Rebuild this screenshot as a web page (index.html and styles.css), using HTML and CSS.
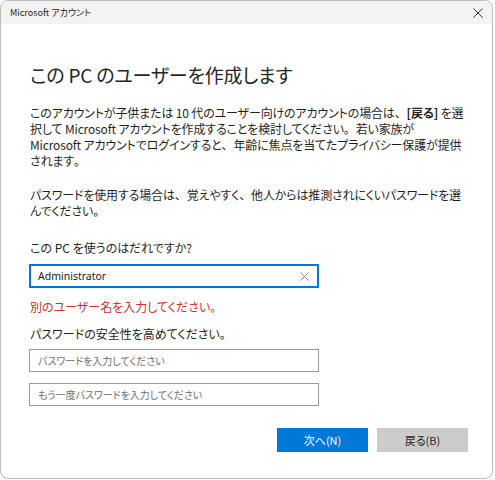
FILE: index.html
```html
<!DOCTYPE html>
<html lang="ja">
<head>
<meta charset="utf-8">
<link rel="stylesheet" href="styles.css">
</head>
<body>
<div class="window">
  <div class="titlebar">
    <span class="title">Microsoft アカウント</span>
    <svg class="close" width="10" height="10" viewBox="0 0 10 10"><path d="M0.5 0.5L9.5 9.5M9.5 0.5L0.5 9.5" stroke="#333" stroke-width="1"/></svg>
  </div>
  <div class="content">
    <h1 class="heading">この PC のユーザーを作成します</h1>
    <p class="para">このアカウントが子供または 10 代のユーザー向けのアカウントの場合は<span class="pn">、</span><b>[戻る]</b> を選<br>択して Microsoft アカウントを作成することを検討してください<span class="pn">。</span>若い家族が<br>Microsoft アカウントでログインすると<span class="pn">、</span>年齢に焦点を当てたプライバシー保護が提供<br>されます<span class="pn">。</span></p>
    <p class="para para2">パスワードを使用する場合は<span class="pn">、</span>覚えやすく<span class="pn">、</span>他人からは推測されにくいパスワードを選<br>んでください<span class="pn">。</span></p>
    <div class="label">この PC を使うのはだれですか?</div>
    <div class="field active">
      <span class="value">Administrator</span>
      <svg class="clear" width="9" height="9" viewBox="0 0 9 9"><path d="M0.5 0.5L8.5 8.5M8.5 0.5L0.5 8.5" stroke="#8a8a8a" stroke-width="1"/></svg>
    </div>
    <div class="error">別のユーザー名を入力してください<span class="pn">。</span></div>
    <div class="label label2">パスワードの安全性を高めてください<span class="pn">。</span></div>
    <div class="field pw"><span class="placeholder">パスワードを入力してください</span></div>
    <div class="field pw pw2"><span class="placeholder">もう一度パスワードを入力してください</span></div>
    <div class="buttons">
      <div class="btn primary">次へ(N)</div>
      <div class="btn secondary">戻る(B)</div>
    </div>
  </div>
</div>
</body>
</html>
```
FILE: styles.css
```css
html, body {
  margin: 0;
  padding: 0;
  background: #ffffff;
}
body {
  font-family: "Noto Sans CJK JP", "Noto Sans", sans-serif;
  color: #1f1f1f;
}
.window {
  box-sizing: border-box;
  width: 493px;
  height: 479px;
  border: 1px solid #bcbcbc;
  border-radius: 8px;
  overflow: hidden;
  background: #ffffff;
}
.titlebar {
  height: 23px;
  background: #f3f3f3;
  display: flex;
  align-items: center;
  justify-content: space-between;
  padding: 0 10px 0 9px;
}
.title {
  font-size: 9px;
  line-height: 12px;
  color: #1f1f1f;
  font-feature-settings: "palt";
}
.close {
  display: block;
  margin-right: -1px;
}
.content {
  padding: 0 0 0 29px;
}
.heading {
  margin: 39px 0 0 0;
  font-size: 19px;
  line-height: 24px;
  font-weight: 400;
  color: #262626;
  letter-spacing: -0.2px;
  font-feature-settings: "palt";
}
.para {
  margin: 18px 0 0 0;
  font-size: 12px;
  line-height: 16px;
  letter-spacing: -0.15px;
  font-feature-settings: "palt";
  white-space: nowrap;
}
.pn {
  font-feature-settings: normal;
}
.para b {
  font-weight: 700;
}
.para2 {
  margin-top: 18px;
}
.label {
  margin-top: 21px;
  font-size: 12px;
  line-height: 16px;
  font-feature-settings: "palt";
}
.label2 {
  margin-top: 11px;
}
.field {
  box-sizing: border-box;
  width: 290px;
  height: 24px;
  margin-left: -1px;
  margin-top: 8px;
  border: 1px solid #9a9a9a;
  display: flex;
  align-items: center;
  justify-content: space-between;
  padding: 0 8px 0 8px;
}
.field.active {
  border: 2px solid #0078d7;
  padding: 0 8px 0 7px;
}
.value {
  font-family: "Noto Sans", sans-serif;
  font-size: 10.5px;
  color: #1a1a1a;
}
.clear {
  display: block;
}
.error {
  margin-top: 11px;
  font-size: 12px;
  line-height: 16px;
  color: #d0312d;
  font-feature-settings: "palt";
}
.pw {
  height: 23px;
  margin-top: 7px;
}
.pw2 {
  margin-top: 11px;
}
.placeholder {
  font-size: 10px;
  color: #6e6e6e;
  font-feature-settings: "palt";
}
.buttons {
  display: flex;
  justify-content: flex-end;
  gap: 9px;
  margin-top: 22px;
  padding-right: 24px;
}
.btn {
  width: 91px;
  height: 24px;
  display: flex;
  align-items: center;
  justify-content: center;
  font-size: 11px;
  font-feature-settings: "palt";
}
.primary {
  background: #0078d7;
  color: #ffffff;
}
.secondary {
  background: #cccccc;
  color: #262626;
}
```
